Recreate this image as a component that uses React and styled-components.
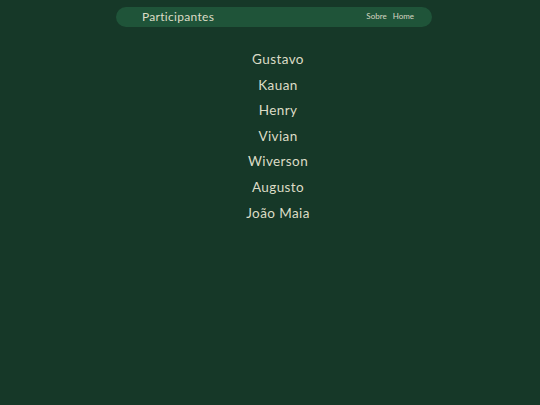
import styled, { createGlobalStyle } from "styled-components"

const GlobalStyle = createGlobalStyle`
    html, body {
        margin: 0;
        padding: 0;
        background-color: #163828;
        font-family: "Lato", "Noto Sans", sans-serif;
        color: #dcdcc6;
    }
    body {
        padding-left: 8px;
        min-height: 405px;
    }
`

const Page = styled.div`
    display: flex;
    flex-direction: column;
    align-items: center;
    padding-top: 7px;
`

const NavBar = styled.nav`
    width: 316px;
    height: 20px;
    box-sizing: border-box;
    display: flex;
    align-items: center;
    justify-content: space-between;
    padding: 0 18px 0 26px;
    background-color: #1f5439;
    border-radius: 10px;
`

const NavTitle = styled.span`
    font-size: 12px;
    letter-spacing: 0.3px;
    margin-top: -2px;
`

const NavLinks = styled.div`
    display: flex;
    gap: 6px;
    margin-top: -2px;
`

const NavLink = styled.a`
    font-size: 8px;
    color: #d6d6c2;
    text-decoration: none;
`

const NameList = styled.ul`
    list-style: none;
    margin: 20px 0 0;
    padding: 0 0 0 8px;
    display: flex;
    flex-direction: column;
    align-items: center;
`

const NameItem = styled.li`
    font-size: 13.5px;
    line-height: 25.6px;
    letter-spacing: 0.4px;
`

const names = ["Gustavo", "Kauan", "Henry", "Vivian", "Wiverson", "Augusto", "João Maia"]

export default function App() {
    return (
        <>
            <GlobalStyle />
            <Page>
                <NavBar>
                    <NavTitle>Participantes</NavTitle>
                    <NavLinks>
                        <NavLink href="#">Sobre</NavLink>
                        <NavLink href="#">Home</NavLink>
                    </NavLinks>
                </NavBar>
                <NameList>
                    {names.map((n) => (
                        <NameItem key={n}>{n}</NameItem>
                    ))}
                </NameList>
            </Page>
        </>
    )
}
